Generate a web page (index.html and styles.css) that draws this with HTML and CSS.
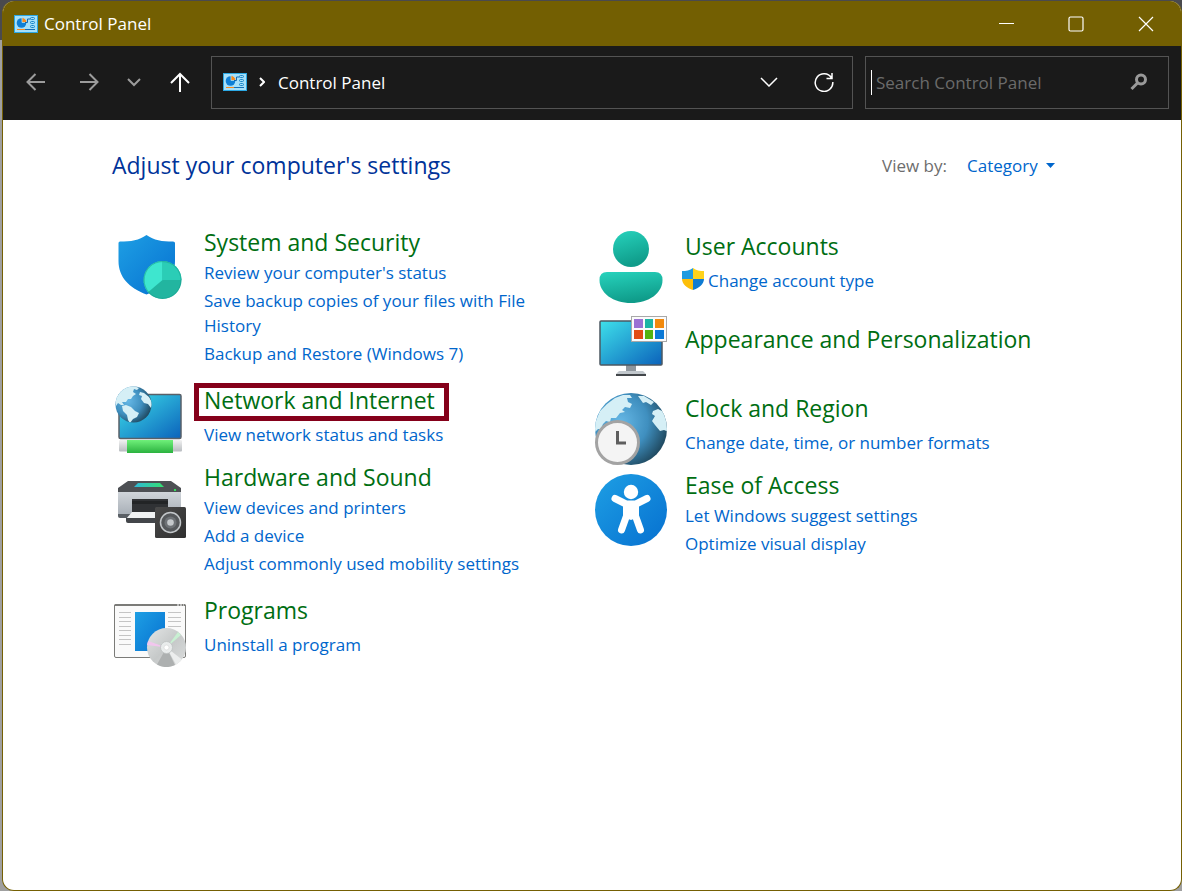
FILE: index.html
```html
<!DOCTYPE html>
<html lang="en">
<head>
    <meta charset="UTF-8">
    <meta name="viewport" content="width=device-width, initial-scale=1.0">
    <title>Control Panel</title>
    <link rel="stylesheet" href="styles.css">
</head>
<body>
    <!-- Shared gradients and symbols -->
    <svg class="defs" width="0" height="0" aria-hidden="true">
        <defs>
            <linearGradient id="blue" x1="0" y1="0" x2="1" y2="1">
                <stop offset="0" stop-color="#1e9fe4"/>
                <stop offset="1" stop-color="#0670d0"/>
            </linearGradient>
            <linearGradient id="screen" x1="0" y1="0" x2="1" y2="1">
                <stop offset="0" stop-color="#3ee0ea"/>
                <stop offset="1" stop-color="#0b62bb"/>
            </linearGradient>
            <linearGradient id="teal" x1="0" y1="0" x2="0.3" y2="1">
                <stop offset="0" stop-color="#27d3bd"/>
                <stop offset="1" stop-color="#0f9c8a"/>
            </linearGradient>
            <linearGradient id="green" x1="0" y1="0" x2="0" y2="1">
                <stop offset="0" stop-color="#6ff07a"/>
                <stop offset="1" stop-color="#2bb23f"/>
            </linearGradient>
            <linearGradient id="metal" x1="0" y1="0" x2="0" y2="1">
                <stop offset="0" stop-color="#f2f2f2"/>
                <stop offset="1" stop-color="#b8bcc0"/>
            </linearGradient>
            <linearGradient id="body" x1="0" y1="0" x2="0" y2="1">
                <stop offset="0" stop-color="#d0d5da"/>
                <stop offset="1" stop-color="#a4abb3"/>
            </linearGradient>
            <linearGradient id="dark" x1="0" y1="0" x2="1" y2="1">
                <stop offset="0" stop-color="#4a4a4a"/>
                <stop offset="1" stop-color="#2f2f2f"/>
            </linearGradient>
            <linearGradient id="lamp" x1="0" y1="0" x2="1" y2="0">
                <stop offset="0" stop-color="#2fb8d8"/>
                <stop offset="1" stop-color="#35e070"/>
            </linearGradient>
            <radialGradient id="globe" cx="0.35" cy="0.4" r="0.7">
                <stop offset="0" stop-color="#66b8e6"/>
                <stop offset="0.55" stop-color="#3f8fbf"/>
                <stop offset="1" stop-color="#1d4459"/>
            </radialGradient>
            <linearGradient id="disc" x1="0" y1="0" x2="1" y2="1">
                <stop offset="0" stop-color="#e4e6e6"/>
                <stop offset="0.5" stop-color="#c6c9c9"/>
                <stop offset="1" stop-color="#dcdede"/>
            </linearGradient>
            <clipPath id="globe-small"><circle cx="19.500" cy="19.500" r="18"/></clipPath>
            <clipPath id="globe-large"><circle cx="36" cy="36" r="36"/></clipPath>
            <clipPath id="uac"><path d="M11 0C8 2.600 4 3 0 3V11C0 16 5 20 11 22C17 20 22 16 22 11V3C18 3 14 2.600 11 0Z"/></clipPath>
        </defs>
        <symbol id="cpl" viewBox="0 0 24 18">
            <rect x="0.500" y="0.500" width="23" height="17" fill="#a6e0fa" stroke="#2ba8e4"/>
            <circle cx="7.500" cy="8" r="4.800" fill="#0f7fd6"/>
            <path d="M8 7.500V2.500A5 5 0 0 1 12.800 7.500Z" fill="#f68a1e" stroke="#a6e0fa" stroke-width="0.800"/>
            <path d="M11 7.500h2.500V4h3" fill="none" stroke="#1467ac"/>
            <g fill="none" stroke="#1b86c8"><rect x="16.500" y="2.500" width="4" height="2" rx="1"/><rect x="16.500" y="6.500" width="4" height="2" rx="1"/><rect x="16.500" y="10.500" width="4" height="2" rx="1"/></g>
            <path d="M3 14.500h8" stroke="#f68a1e"/>
            <path d="M11 14.500h10" stroke="#146fb8"/>
        </symbol>
    </svg>

    <div class="window">
        <header class="titlebar">
            <svg class="app-icon" viewBox="0 0 24 18" aria-hidden="true"><use href="#cpl"/></svg>
            <span class="title">Control Panel</span>
            <div class="window-buttons">
                <button type="button" aria-label="Minimize">
                    <svg width="16" height="16" viewBox="0 0 16 16"><path d="M1 7.500h15"/></svg>
                </button>
                <button type="button" aria-label="Maximize">
                    <svg width="16" height="16" viewBox="0 0 16 16"><rect x="1" y="1" width="14" height="14" rx="1.500"/></svg>
                </button>
                <button type="button" aria-label="Close">
                    <svg width="16" height="16" viewBox="0 0 16 16"><path d="M1 1l14 14M15 1L1 15"/></svg>
                </button>
            </div>
        </header>

        <nav class="toolbar">
            <div class="nav-buttons">
                <button type="button" class="nav-btn dim" aria-label="Back">
                    <svg width="20" height="20" viewBox="0 0 20 20"><path d="M19 10H2M9.500 2L1.500 10l8 8"/></svg>
                </button>
                <button type="button" class="nav-btn dim" aria-label="Forward">
                    <svg width="20" height="20" viewBox="0 0 20 20"><path d="M1 10h17M10.500 2l8 8-8 8"/></svg>
                </button>
                <button type="button" class="nav-btn dim narrow" aria-label="Recent locations">
                    <svg width="14" height="10" viewBox="0 0 14 10"><path d="M1 2l6 6 6-6"/></svg>
                </button>
                <button type="button" class="nav-btn" aria-label="Up">
                    <svg width="20" height="22" viewBox="0 0 20 22"><path d="M10 21V3M1 12l9-9 9 9"/></svg>
                </button>
            </div>
            <div class="address">
                <svg class="app-icon" viewBox="0 0 24 18" aria-hidden="true"><use href="#cpl"/></svg>
                <svg class="crumb-arrow" width="6" height="10" viewBox="0 0 6 10"><path d="M1 1l4 4-4 4"/></svg>
                <a href="#" class="crumb">Control Panel</a>
                <button type="button" class="addr-btn" aria-label="Previous locations">
                    <svg width="18" height="10" viewBox="0 0 18 10"><path d="M1 1l8 8 8-8"/></svg>
                </button>
                <button type="button" class="addr-btn" aria-label="Refresh">
                    <svg width="20" height="20" viewBox="0 0 20 20"><path d="M17.500 6A8.800 8.800 0 1 0 18.800 10M18 1v5.500H12.500"/></svg>
                </button>
            </div>
            <div class="search">
                <input type="text" placeholder="Search Control Panel" aria-label="Search Control Panel">
                <svg class="search-icon" width="18" height="18" viewBox="0 0 18 18" aria-hidden="true"><circle cx="11" cy="6.500" r="4.500"/><path d="M7.500 10L1.500 16"/></svg>
            </div>
        </nav>

        <main class="content">
            <div class="content-header">
                <h1>Adjust your computer's settings</h1>
                <div class="view-by">
                    <label for="view">View by:</label>
                    <select id="view">
                        <option>Category</option>
                    </select>
                    <svg width="9" height="5" viewBox="0 0 9 5" aria-hidden="true"><path d="M0 0h9L4.500 5z"/></svg>
                </div>
            </div>

            <div class="categories">
                <div class="column">
                    <section class="category multi">
                        <svg class="category-icon" viewBox="0 0 72 72" aria-hidden="true">
                            <path d="M32.500 4C25 9.500 17 10.500 6 10.500Q4.500 10.500 4.500 12V30C4.500 46 15 57 32.500 63.500C50 57 61 46 61 30V12Q61 10.500 59 10.500C48 10.500 40 9.500 32.500 4Z" fill="url(#blue)"/>
                            <circle cx="48.500" cy="49" r="19" fill="#22b5a0"/>
                            <path d="M48.500 49V30A19 19 0 0 0 34 61.200Z" fill="#3ee6cf"/>
                            <path d="M48.500 49V30A19 19 0 0 1 67.500 49Z" fill="#2bcdb6"/>
                            <circle cx="48.500" cy="49" r="18.400" fill="none" stroke="#1aa18f" stroke-opacity="0.600"/>
                        </svg>
                        <div class="category-text">
                            <h2><a href="#">System and Security</a></h2>
                            <ul>
                                <li><a href="#">Review your computer's status</a></li>
                                <li><a href="#">Save backup copies of your files with File History</a></li>
                                <li><a href="#">Backup and Restore (Windows 7)</a></li>
                            </ul>
                        </div>
                    </section>

                    <section class="category">
                        <svg class="category-icon" viewBox="0 0 72 72" aria-hidden="true">
                            <rect x="5" y="9.500" width="62" height="44" rx="1.500" fill="url(#screen)" stroke="#596068" stroke-width="1.500"/>
                            <rect x="5" y="55" width="63" height="11.500" rx="1" fill="url(#metal)"/>
                            <rect x="13" y="55" width="46" height="13" fill="url(#green)"/>
                            <circle cx="19.500" cy="19.500" r="18" fill="url(#globe)"/>
                            <g clip-path="url(#globe-small)" fill="#d5eff6">
                                <path d="M2 12l4-6 6-4 8-1 5 2-2 2-3-1-1 3 3 2-3 2-2 3-3 0-2 3-4 0 2 3-3 0-3-2-2 3z"/>
                                <path d="M8 21l4-1 5 2 4 4 4 2-2 4-4 2-3 4-2-3-1-5-4-4z"/>
                                <path d="M26 7l4 1 5 4 4 7-2 4-3-4-4-1-3-4 1-3-3-1z"/>
                            </g>
                        </svg>
                        <div class="category-text">
                            <h2 class="marked"><a href="#">Network and Internet</a></h2>
                            <ul>
                                <li><a href="#">View network status and tasks</a></li>
                            </ul>
                        </div>
                    </section>

                    <section class="category multi">
                        <svg class="category-icon" viewBox="0 0 72 72" aria-hidden="true">
                            <path d="M14 15H57L67 22V27H4V22Z" fill="#4d5054"/>
                            <path d="M24 17H46L50 21H20Z" fill="url(#lamp)"/>
                            <path d="M4 26H67V49a2 2 0 0 1-2 2H6a2 2 0 0 1-2-2Z" fill="url(#body)"/>
                            <path d="M4 48H20V52H6a2 2 0 0 1-2-2Z" fill="#5b6066"/>
                            <rect x="60" y="23" width="2" height="2" fill="#34e05a"/>
                            <rect x="18" y="33" width="36" height="14" fill="#303235"/>
                            <path d="M18 35h36v3H18z" fill="#222426"/>
                            <path d="M18 46H54L50 53H12Z" fill="#f0f2f3"/>
                            <path d="M12 52H52V57H14a2 2 0 0 1-2-2Z" fill="#43464a"/>
                            <rect x="41" y="41" width="31" height="31" rx="1.500" fill="url(#dark)"/>
                            <circle cx="56.500" cy="56.500" r="10" fill="#55585b" stroke="#c2c6c9" stroke-width="1.500"/>
                            <circle cx="56.500" cy="56.500" r="6" fill="#6e7276"/>
                            <circle cx="56.500" cy="56.500" r="3.300" fill="#c5c9cc"/>
                        </svg>
                        <div class="category-text">
                            <h2><a href="#">Hardware and Sound</a></h2>
                            <ul>
                                <li><a href="#">View devices and printers</a></li>
                                <li><a href="#">Add a device</a></li>
                                <li><a href="#">Adjust commonly used mobility settings</a></li>
                            </ul>
                        </div>
                    </section>

                    <section class="category">
                        <svg class="category-icon" viewBox="0 0 72 72" aria-hidden="true">
                            <rect x="0.500" y="9.500" width="71" height="53" rx="1.500" fill="#fafafa" stroke="#7b7b78"/>
                            <path d="M0 11a2 2 0 0 1 2-2H70a2 2 0 0 1 2 2H0Z" fill="#7b7b78"/>
                            <path d="M63 10h2M66 10h2M69 10h1" stroke="#fff"/>
                            <path d="M5 17.500H17M5 22.500H17M5 26.500H17M5 31.500H17M5 35.500H17M5 40.500H17M5 44.500H17M5 49.500H17M54 17.500H67M54 22.500H67M54 26.500H67M54 31.500H67" stroke="#c4c4c4"/>
                            <rect x="21" y="17" width="30" height="39" fill="url(#blue)"/>
                            <circle cx="52.500" cy="52.500" r="19.500" fill="url(#disc)"/>
                            <path d="M52.500 52.500L43 69.500a19.500 19.500 0 0 0 18 0.500Z" fill="#adb0b0"/>
                            <path d="M52.500 52.500L62 69.500a19.500 19.500 0 0 0 6-5Z" fill="#eceeee"/>
                            <path d="M52.500 52.500L34 46l-1 4Z" fill="#f2c6ee"/>
                            <path d="M52.500 52.500L64 37l3 3Z" fill="#c8f0d2"/>
                            <circle cx="52.500" cy="52.500" r="6" fill="#e9ecec" stroke="#bcc0c0" stroke-width="0.800"/>
                            <circle cx="52.500" cy="52.500" r="2.500" fill="#fff" stroke="#ccc" stroke-width="0.500"/>
                        </svg>
                        <div class="category-text">
                            <h2><a href="#">Programs</a></h2>
                            <ul>
                                <li><a href="#">Uninstall a program</a></li>
                            </ul>
                        </div>
                    </section>
                </div>

                <div class="column">
                    <section class="category">
                        <svg class="category-icon" viewBox="0 0 72 72" aria-hidden="true">
                            <circle cx="36" cy="18" r="18" fill="url(#teal)"/>
                            <path d="M12 41H60Q67.500 41 67.500 49C67.500 62 54 72 36 72S4.500 62 4.500 49Q4.500 41 12 41Z" fill="url(#teal)"/>
                        </svg>
                        <div class="category-text">
                            <h2><a href="#">User Accounts</a></h2>
                            <ul>
                                <li class="shielded">
                                    <svg width="22" height="22" viewBox="0 0 22 22" aria-hidden="true">
                                        <g clip-path="url(#uac)">
                                            <path d="M0 0h11v11H0z" fill="#209be0"/>
                                            <path d="M11 0h11v11H11z" fill="#ffd21a"/>
                                            <path d="M0 11h11v11H0z" fill="#fdbf0a"/>
                                            <path d="M11 11h11v11H11z" fill="#0f7bd2"/>
                                        </g>
                                    </svg>
                                    <a href="#">Change account type</a>
                                </li>
                            </ul>
                        </div>
                    </section>

                    <section class="category plain">
                        <svg class="category-icon" viewBox="0 0 72 72" aria-hidden="true">
                            <path d="M31 53H41V60H31Z" fill="#8f969d"/>
                            <path d="M24 59H48L51 62H21Z" fill="#c2c8cd"/>
                            <path d="M21 62H51V64H21Z" fill="#43474b"/>
                            <rect x="5" y="9" width="62" height="44" rx="1" fill="url(#screen)" stroke="#4c5862" stroke-width="1.500"/>
                            <rect x="36.500" y="4.500" width="35" height="25" fill="#fbfbfb" stroke="#a8a8a8"/>
                            <g>
                                <rect x="39" y="7" width="9" height="9" fill="#9b72d4"/>
                                <rect x="50" y="7" width="8" height="9" fill="#1db5a4"/>
                                <rect x="60" y="7" width="9" height="9" fill="#f2890c"/>
                                <rect x="39" y="18" width="9" height="9" fill="#e24c13"/>
                                <rect x="50" y="18" width="8" height="9" fill="#54b20f"/>
                                <rect x="60" y="18" width="9" height="9" fill="#0b79d6"/>
                            </g>
                        </svg>
                        <div class="category-text">
                            <h2><a href="#">Appearance and Personalization</a></h2>
                        </div>
                    </section>

                    <section class="category">
                        <svg class="category-icon" viewBox="0 0 72 72" aria-hidden="true">
                            <circle cx="36" cy="36" r="36" fill="url(#globe)"/>
                            <g clip-path="url(#globe-large)" fill="#d5eff6">
                                <path d="M0 30L5 18l7-7 8-6 8-3 7 0 2 3-5 0 1 4 4 2-2 4-5-1-3 3 3 2-5 1-4 5-5 0-1 4-4-1-3 3-2 5-3 0-3 3z"/>
                                <path d="M43 3l6 0 10 6-3 3-5-3-3 1z"/>
                                <path d="M58 18l5-2 6 3 5 8v12l-5-2-4 1-5-6-3-4 3-5-3-2z"/>
                            </g>
                            <circle cx="22.500" cy="49.500" r="21" fill="#f4f4f4" stroke="#a3a3a3" stroke-width="3"/>
                            <path d="M22.500 38V50H31" fill="none" stroke="#5e5e5e" stroke-width="3"/>
                        </svg>
                        <div class="category-text">
                            <h2><a href="#">Clock and Region</a></h2>
                            <ul>
                                <li><a href="#">Change date, time, or number formats</a></li>
                            </ul>
                        </div>
                    </section>

                    <section class="category multi">
                        <svg class="category-icon" viewBox="0 0 72 72" aria-hidden="true">
                            <circle cx="36" cy="36" r="36" fill="url(#blue)"/>
                            <circle cx="36" cy="18" r="7.200" fill="#fff"/>
                            <path d="M20 24.500L31 30H41L52 24.500" fill="none" stroke="#fff" stroke-width="7" stroke-linecap="round" stroke-linejoin="round"/>
                            <path d="M28 29H44V43L36 46 28 43Z" fill="#fff"/>
                            <path d="M31.500 42L26.500 56M40.500 42L45.500 56" fill="none" stroke="#fff" stroke-width="7" stroke-linecap="round"/>
                        </svg>
                        <div class="category-text">
                            <h2><a href="#">Ease of Access</a></h2>
                            <ul>
                                <li><a href="#">Let Windows suggest settings</a></li>
                                <li><a href="#">Optimize visual display</a></li>
                            </ul>
                        </div>
                    </section>
                </div>
            </div>
        </main>
    </div>
</body>
</html>
```
FILE: styles.css
```css
* {
    box-sizing: border-box;
}
body {
    margin: 0;
    padding: 1px 0 0 2px;
    min-height: 100vh;
    display: flex;
    background: linear-gradient(#4a4a4e 40px, #a0a0a0 40px);
    font-family: "Segoe UI", "Open Sans", "Noto Sans", sans-serif;
    font-size: 17px;
    line-height: 25px;
}
a {
    color: inherit;
    text-decoration: none;
}
a:hover {
    text-decoration: underline;
}
button {
    display: flex;
    align-items: center;
    justify-content: center;
    padding: 0;
    border: none;
    background: none;
    color: inherit;
    cursor: pointer;
}
button svg {
    fill: none;
    stroke: currentColor;
    stroke-width: 1.5;
}
.defs {
    position: absolute;
}
.window {
    flex: 1;
    display: flex;
    flex-direction: column;
    border: 1px solid #756003;
    border-top: none;
    border-radius: 12px;
    background: white;
    overflow: hidden;
}

/* Title bar */
.titlebar {
    display: flex;
    align-items: center;
    height: 45px;
    padding-left: 11px;
    background-color: #735f02;
    color: white;
}
.app-icon {
    width: 24px;
    height: 18px;
}
.title {
    margin-left: 6px;
}
.window-buttons {
    display: flex;
    margin-left: auto;
    height: 100%;
}
.window-buttons button {
    width: 70px;
}
.window-buttons svg {
    stroke-width: 1.2;
}

/* Toolbar */
.toolbar {
    display: flex;
    align-items: center;
    height: 74px;
    padding: 0 12px 2px 6px;
    background-color: #1a1a1a;
    color: white;
}
.nav-buttons {
    display: flex;
    margin-right: 5px;
}
.nav-btn {
    width: 53px;
    height: 52px;
}
.nav-btn.narrow {
    width: 38px;
}
.nav-btn svg {
    stroke-width: 2;
}
.dim {
    color: #9c9c9c;
}
.address,
.search {
    display: flex;
    align-items: center;
    height: 53px;
    border: 1px solid #535353;
}
.address {
    flex: 2;
    padding: 0 1px 0 11px;
}
.crumb-arrow {
    margin: 0 13px 0 12px;
    fill: none;
    stroke: white;
    stroke-width: 2;
}
.crumb {
    margin-right: auto;
}
.addr-btn {
    width: 55px;
    height: 100%;
}
.search {
    flex: 1;
    max-width: 304px;
    margin-left: 12px;
    padding: 0 20px 0 5px;
}
.search input {
    flex: 1;
    min-width: 0;
    height: 25px;
    padding: 0 0 0 4px;
    border: none;
    border-left: 1px solid white;
    outline: none;
    background: none;
    color: white;
    font: inherit;
}
.search input::placeholder {
    color: #6b6b6b;
}
.search-icon {
    fill: none;
    stroke: #999;
    stroke-width: 3;
}

/* Content */
.content {
    flex: 1;
    padding: 30px 126px 30px 109px;
}
.content-header {
    display: flex;
    align-items: center;
    justify-content: space-between;
    margin-bottom: 51px;
}
h1,
h2 {
    margin: 0;
    font-weight: normal;
    font-size: 23px;
    line-height: 30px;
}
h1 {
    color: #003399;
}
.view-by {
    display: flex;
    align-items: center;
    color: #6d6d6d;
}
.view-by select {
    margin: 0 8px 0 20px;
    padding: 0;
    border: none;
    appearance: none;
    background: none;
    color: #0066cc;
    font: inherit;
}
.view-by svg {
    fill: #0066cc;
}
.categories {
    display: grid;
    grid-template-columns: 1fr 1fr;
    gap: 21px;
    margin-left: 2px;
}
.category {
    display: flex;
    align-items: flex-start;
    margin-bottom: 9px;
}
.category-icon {
    flex: none;
    width: 72px;
    height: 72px;
    margin-right: 18px;
}
.category h2 {
    color: #006e12;
}
.category ul {
    margin: 0;
    padding: 7px 0 0;
    list-style: none;
    color: #0066cc;
}
.category li + li {
    margin-top: 3px;
}

/* Categories with several tasks sit tighter */
.multi {
    margin-top: -4px;
    margin-bottom: 19px;
}
.multi .category-icon {
    margin-top: 4px;
}
.multi ul {
    padding-top: 3px;
}
.plain h2 {
    padding-top: 12px;
}
.shielded {
    display: flex;
    gap: 4px;
    margin-left: -3px;
}
.marked {
    position: relative;
    width: fit-content;
}
.marked::after {
    content: "";
    position: absolute;
    inset: -2px -14px -6px -10px;
    border: 5px solid #85001a;
    pointer-events: none;
}
```
